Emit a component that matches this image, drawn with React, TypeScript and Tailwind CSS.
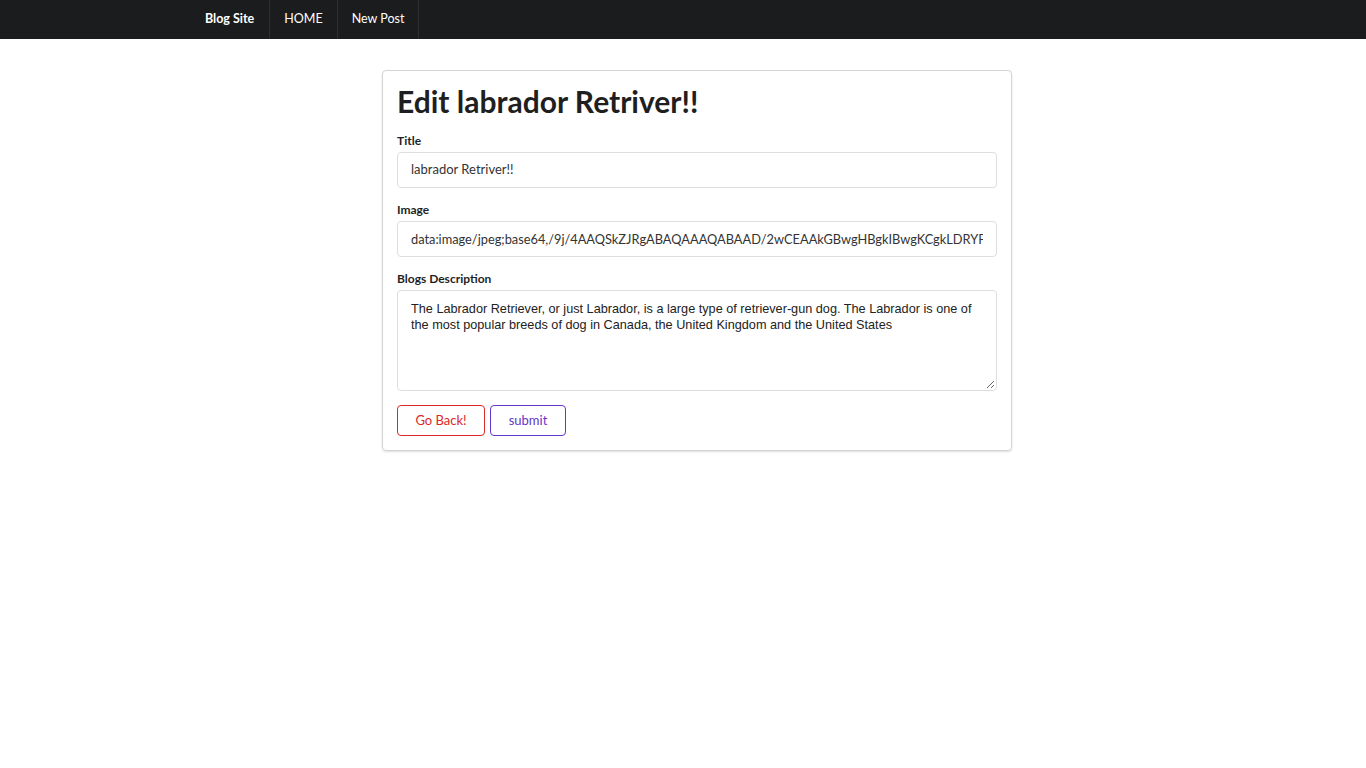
import React from "react";

export default function App() {
  const lato = { fontFamily: "Lato, 'Noto Sans', sans-serif" };
  return (
    <div className="min-h-[768px] bg-white" style={lato}>
      <nav className="h-[39px] bg-[#1b1c1d] flex">
        <div className="flex ml-[190px] h-full">
          <div className="flex items-center px-[15px] border-r border-[#2d2e2f] text-white text-[12.5px] font-bold">Blog Site</div>
          <div className="flex items-center px-[14px] border-r border-[#2d2e2f] text-white text-[12.5px]">HOME</div>
          <div className="flex items-center px-[14px] border-r border-[#2d2e2f] text-white text-[12.5px]">New Post</div>
        </div>
      </nav>
      <div className="flex justify-center pt-[31px]">
        <div className="ml-[28px] w-[630px] border border-[#d4d4d5] rounded-[4px] shadow-[0_1px_2px_0_rgba(34,36,38,0.15)] px-[14px] pt-[12px] pb-[14px]">
          <h1 className="text-[30px] leading-[36px] font-bold text-[#1f1f1f] mb-[14px]">Edit labrador Retriver!!</h1>
          <div className="mb-[14px]">
            <label className="block text-[12px] leading-[15px] font-bold text-[#1f1f1f] mb-[4px]">Title</label>
            <div className="h-[36px] border border-[#dededf] rounded-[4px] flex items-center px-[13px] text-[13px] text-[#333]">labrador Retriver!!</div>
          </div>
          <div className="mb-[14px]">
            <label className="block text-[12px] leading-[15px] font-bold text-[#1f1f1f] mb-[4px]">Image</label>
            <div className="h-[36px] border border-[#dededf] rounded-[4px] px-[13px] text-[12.8px] leading-[34px] text-[#333]">
              <div className="w-[572px] overflow-hidden whitespace-nowrap">data:image/jpeg;base64,/9j/4AAQSkZJRgABAQAAAQABAAD/2wCEAAkGBwgHBgkIBwgKCgkLDRYPD</div>
            </div>
          </div>
          <div className="mb-[14px]">
            <label className="block text-[12px] leading-[15px] font-bold text-[#1f1f1f] mb-[4px]">Blogs Description</label>
            <div className="relative h-[101px] border border-[#dededf] rounded-[4px] pl-[13px] pr-[14px] pt-[10px] text-[12.7px] leading-[16px] text-[#222]" style={{ fontFamily: "'Liberation Sans', Arial, sans-serif" }}>
              The Labrador Retriever, or just Labrador, is a large type of retriever-gun dog. The Labrador is one of the most popular breeds of dog in Canada, the United Kingdom and the United States
              <svg className="absolute right-[1px] bottom-[1px]" width="10" height="10" viewBox="0 0 10 10">
                <line x1="9" y1="2" x2="2" y2="9" stroke="#666" strokeWidth="1" />
                <line x1="9" y1="6" x2="6" y2="9" stroke="#666" strokeWidth="1" />
              </svg>
            </div>
          </div>
          <div className="flex gap-[5px]">
            <button className="h-[31px] w-[88px] border border-[#db2828] rounded-[4px] text-[#db2828] text-[13px] bg-white">Go Back!</button>
            <button className="h-[31px] w-[76px] border border-[#6435c9] rounded-[4px] text-[#6435c9] text-[13px] bg-white">submit</button>
          </div>
        </div>
      </div>
    </div>
  );
}
